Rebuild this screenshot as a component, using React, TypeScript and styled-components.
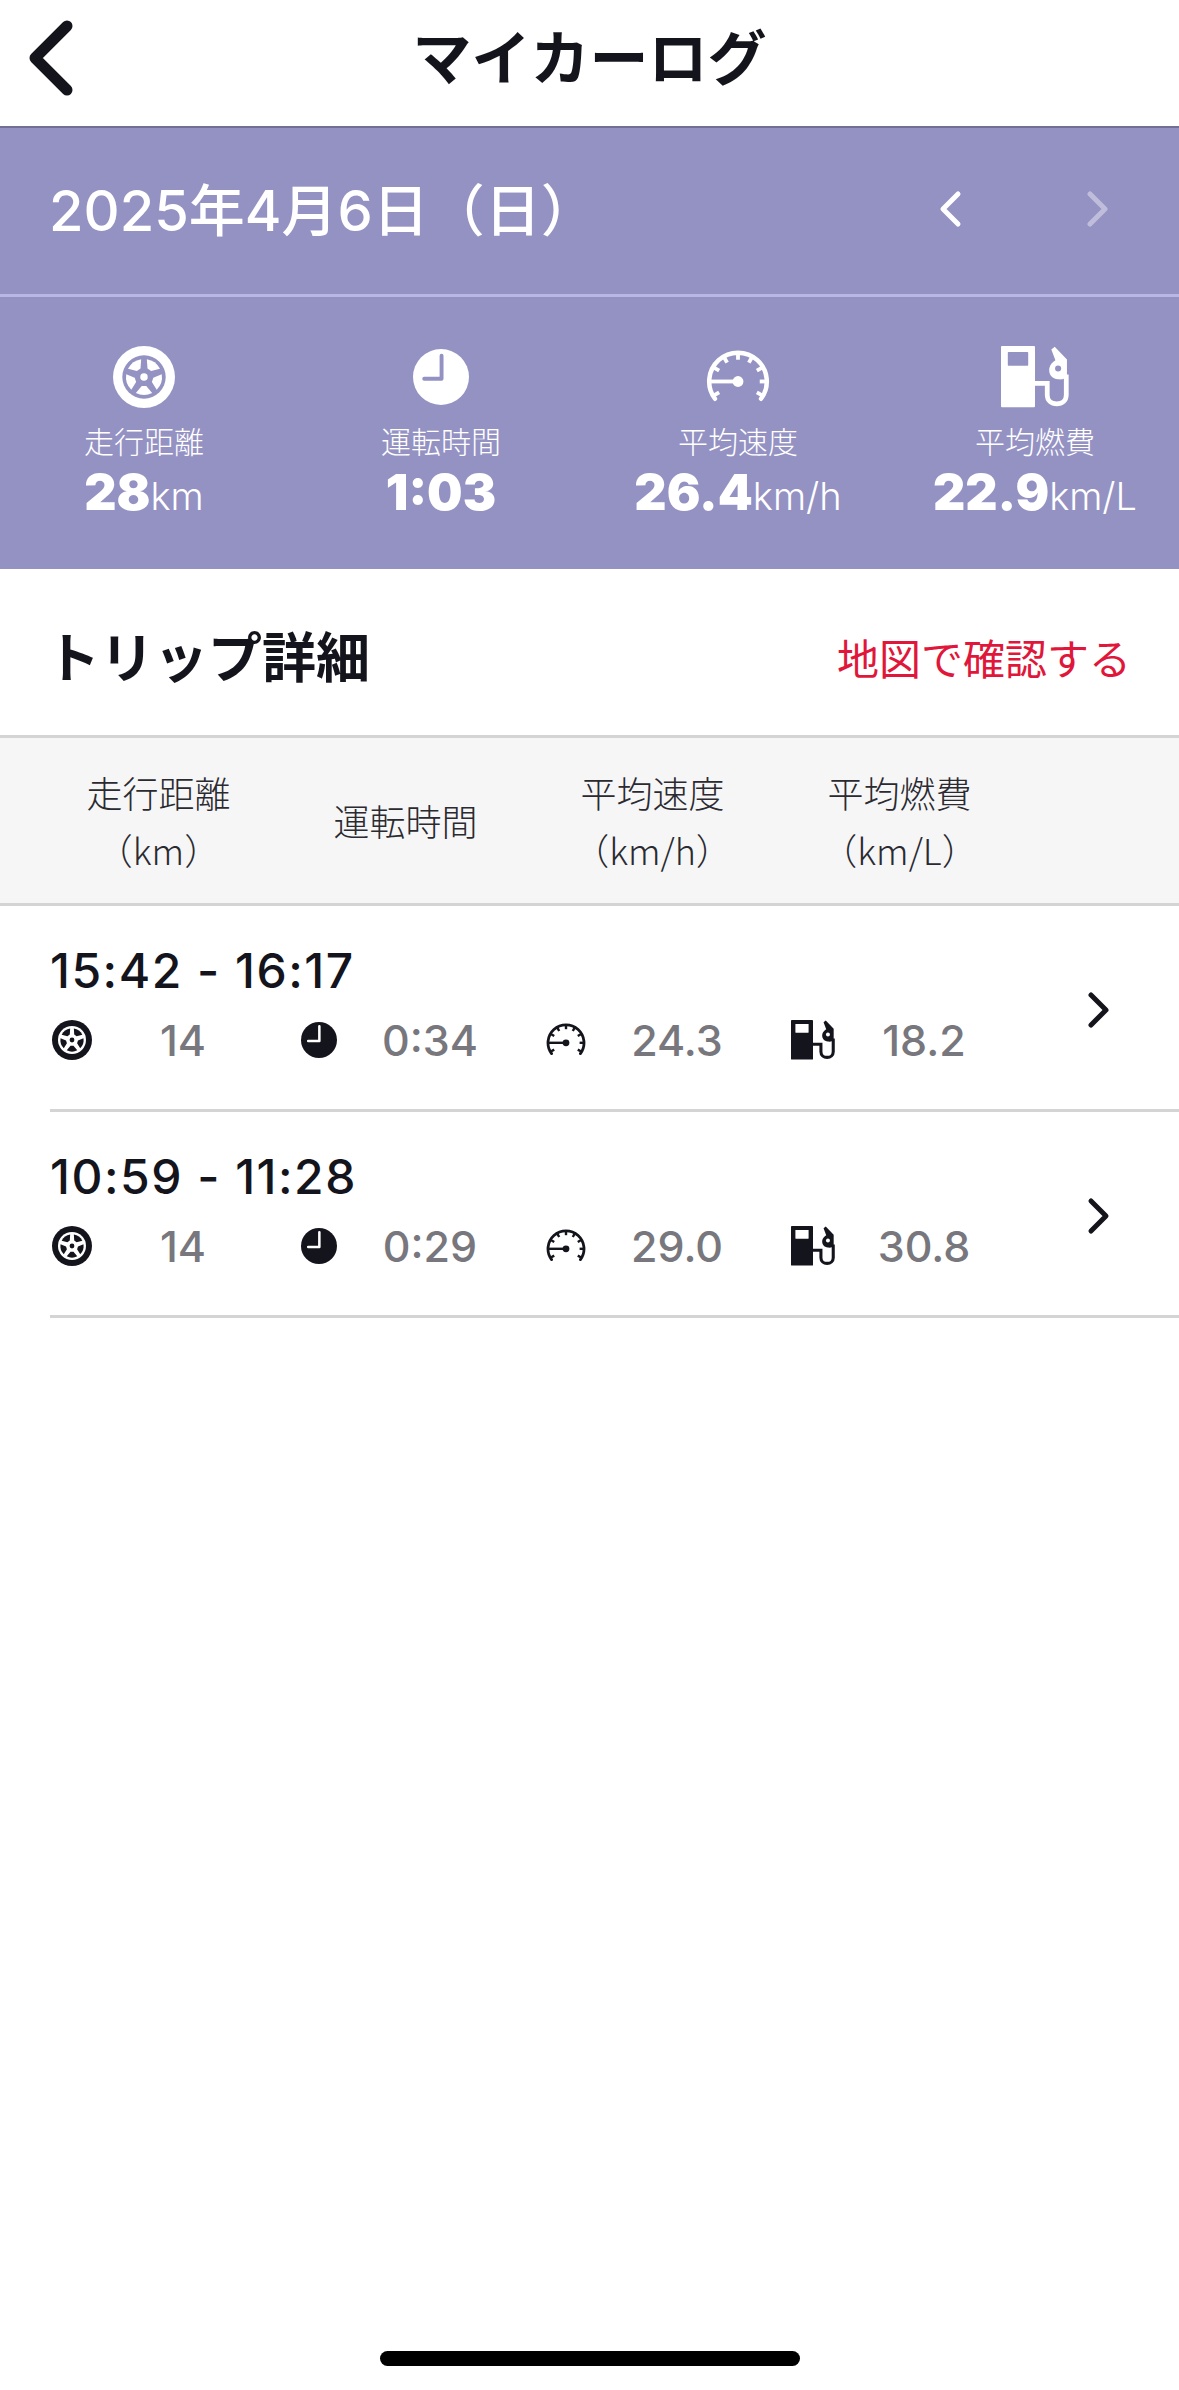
import React from 'react';
import styled, { createGlobalStyle } from 'styled-components';

const PURPLE = '#9492c3';
const INK = '#14141c';

const GlobalStyle = createGlobalStyle`
  html, body {
    margin: 0;
    padding: 0;
    background: #ffffff;
  }
  body {
    font-family: "Inter", "Noto Sans CJK JP", sans-serif;
    color: ${INK};
  }
`;

const Page = styled.div`
  position: relative;
  width: 1179px;
  height: 2390px;
  overflow: hidden;
  background: #ffffff;
`;

const Header = styled.header`
  height: 126px;
  display: flex;
  align-items: center;
  justify-content: center;
  position: relative;
  border-bottom: 2px solid #716f93;
`;

const BackButton = styled.div`
  position: absolute;
  left: 24px;
  top: 16px;
  width: 56px;
  height: 84px;
`;

const Title = styled.h1`
  margin: 0 0 18px;
  font-family: "Noto Sans CJK JP", sans-serif;
  font-size: 59px;
  font-weight: 700;
  line-height: 1;
`;

const DateBar = styled.div`
  height: 166px;
  background: ${PURPLE};
  border-bottom: 3px solid #b9b8e2;
  display: flex;
  align-items: center;
  justify-content: space-between;
  padding: 0 68px 0 49px;
`;

const DateText = styled.div`
  font-family: "Inter", "Noto Sans CJK JP", sans-serif;
  font-size: 56px;
  font-weight: 500;
  color: #ffffff;
  line-height: 1;
`;

const DateNav = styled.div`
  display: flex;
  gap: 122px;
  margin-top: -5px;
`;

const NavArrow = styled.svg<{ $dim?: boolean }>`
  width: 26px;
  height: 38px;
  display: block;
  opacity: ${(p) => (p.$dim ? 0.4 : 1)};
`;

const StatsBar = styled.div`
  height: 272px;
  background: ${PURPLE};
  display: grid;
  grid-template-columns: repeat(4, 297px);
  justify-content: center;
  color: #ffffff;
`;

const StatCell = styled.div`
  display: flex;
  flex-direction: column;
  align-items: center;
  padding-top: 44px;
  white-space: nowrap;
`;

const StatIcon = styled.div`
  width: 72px;
  height: 72px;
  display: flex;
  align-items: center;
  justify-content: center;
`;

const StatLabel = styled.div`
  font-family: "Noto Sans CJK JP", sans-serif;
  font-size: 30px;
  font-weight: 300;
  line-height: 44px;
  margin-top: 5px;
`;

const StatValue = styled.div`
  font-size: 50px;
  font-weight: 900;
  line-height: 56px;
  margin-top: 2px;
`;

const StatUnit = styled.span`
  font-size: 38px;
  font-weight: 300;
`;

const TripHeader = styled.div`
  height: 160px;
  display: flex;
  align-items: center;
  justify-content: space-between;
  padding: 6px 48px 0 46px;
  border-bottom: 3px solid #d4d4d4;
`;

const TripTitle = styled.h2`
  margin: 0;
  font-family: "Noto Sans CJK JP", sans-serif;
  font-size: 54px;
  font-weight: 700;
  line-height: 1;
`;

const MapLink = styled.a`
  margin-top: 3px;
  font-family: "Noto Sans CJK JP", sans-serif;
  font-size: 42px;
  font-weight: 400;
  color: #e0173a;
  line-height: 1;
`;

const ColumnHead = styled.div`
  height: 165px;
  background: #f6f6f7;
  border-bottom: 3px solid #d4d4d4;
  display: grid;
  grid-template-columns: repeat(4, 247px);
  padding-left: 35px;
  align-items: center;
`;

const HeadCell = styled.div`
  text-align: center;
  font-family: "Noto Sans CJK JP", sans-serif;
  font-size: 36px;
  font-weight: 300;
  line-height: 57px;
  color: #2a2a30;
`;

const TripRow = styled.div`
  height: 165px;
  margin-left: 50px;
  border-bottom: 3px solid #d4d4d4;
  position: relative;
  padding-top: 38px;
`;

const TripTime = styled.div`
  font-size: 48px;
  font-weight: 500;
  letter-spacing: 1.5px;
  line-height: 54px;
`;

const TripStats = styled.div`
  display: grid;
  grid-template-columns: repeat(4, 247px);
  margin-top: 20px;
`;

const TripStat = styled.div`
  display: grid;
  grid-template-columns: 44px 178px;
  align-items: center;
`;

const TripIcon = styled.div`
  width: 44px;
  height: 44px;
  display: flex;
  align-items: center;
  justify-content: center;
`;

const TripValue = styled.div`
  text-align: center;
  font-size: 43px;
  font-weight: 500;
  line-height: 44px;
  color: #77777d;
`;

const RowChevron = styled.svg`
  position: absolute;
  left: 1036px;
  top: 85px;
  width: 26px;
  height: 38px;
`;

const HomeIndicator = styled.div`
  position: absolute;
  left: 380px;
  top: 2351px;
  width: 420px;
  height: 15px;
  border-radius: 8px;
  background: #000000;
`;

type IconProps = { size: number; hole: string };

// white wedges sit between the five spokes of the wheel
const wedgePath = (i: number) => {
  const a = ((i * 72 + 36 - 90) * Math.PI) / 180;
  const pt = (r: number, d: number) => {
    const t = a + (d * Math.PI) / 180;
    return `${(50 + r * Math.cos(t)).toFixed(2)} ${(50 + r * Math.sin(t)).toFixed(2)}`;
  };
  return `M${pt(15, -14)}L${pt(29, -27)}A29 29 0 0 1 ${pt(29, 27)}L${pt(15, 14)}Z`;
};

const WheelIcon: React.FC<IconProps> = ({ size, hole }) => (
  <svg width={size} height={size} viewBox="0 0 100 100">
    <circle cx="50" cy="50" r="50" fill="currentColor" />
    <circle cx="50" cy="50" r="35" fill={hole} />
    {[0, 1, 2, 3, 4].map((i) => (
      <path key={i} d={wedgePath(i)} fill="currentColor" />
    ))}
    <circle cx="50" cy="50" r="6" fill="currentColor" />
  </svg>
);

const ClockIcon: React.FC<IconProps> = ({ size, hole }) => (
  <svg width={size} height={size} viewBox="0 0 100 100">
    <circle cx="50" cy="50" r="50" fill="currentColor" />
    <path d="M51 12V53H20" fill="none" stroke={hole} strokeWidth="7" strokeLinecap="round" strokeLinejoin="round" />
  </svg>
);

const GAUGE_TICKS = [-120, -60, -30, 0, 30, 60, 90, 120];

const gaugeTick = (deg: number) => {
  const t = ((deg - 90) * Math.PI) / 180;
  const at = (r: number) => `${(50 + r * Math.cos(t)).toFixed(2)} ${(57 + r * Math.sin(t)).toFixed(2)}`;
  return `M${at(45)}L${at(34)}`;
};

const GaugeIcon: React.FC<{ size: number }> = ({ size }) => (
  <svg width={size} height={size} viewBox="0 0 100 100" fill="none" stroke="currentColor">
    <path d="M14 84A45 45 0 1 1 86 84" strokeWidth="7" strokeLinecap="round" />
    {GAUGE_TICKS.map((deg) => (
      <path key={deg} d={gaugeTick(deg)} strokeWidth="6" />
    ))}
    <path d="M5 57H50" strokeWidth="6" />
    <circle cx="50" cy="57" r="8.5" fill="currentColor" stroke="none" />
  </svg>
);

const PumpIcon: React.FC<IconProps> = ({ size, hole }) => (
  <svg width={size} height={size * 0.9} viewBox="0 0 100 90">
    <rect x="0" y="0" width="50" height="90" rx="1.5" fill="currentColor" />
    <rect x="10" y="9" width="30" height="20" rx="1" fill={hole} />
    <path d="M50 55H68V72C68 80 74 85 82 85C90 85 96 80 96 72V42" fill="none" stroke="currentColor" strokeWidth="7" />
    <path d="M74 5L79 1L97 20V42C97 48 90 50 84 49C75 48 70 42 71 33C72 27 76 24 80 21Z" fill="currentColor" />
    <circle cx="84" cy="33" r="4.5" fill={hole} />
  </svg>
);

const Chevron: React.FC<{ left?: boolean; color: string; width: number }> = ({ left, color, width }) => (
  <polyline
    points={left ? '21,4 6,19 21,34' : '5,4 20,19 5,34'}
    fill="none"
    stroke={color}
    strokeWidth={width}
    strokeLinecap="round"
    strokeLinejoin="round"
  />
);

const stats = [
  { key: 'dist', label: '走行距離', value: '28', unit: 'km' },
  { key: 'time', label: '運転時間', value: '1:03', unit: '' },
  { key: 'speed', label: '平均速度', value: '26.4', unit: 'km/h' },
  { key: 'fuel', label: '平均燃費', value: '22.9', unit: 'km/L' },
];

const trips = [
  { time: '15:42 - 16:17', dist: '14', drive: '0:34', speed: '24.3', fuel: '18.2' },
  { time: '10:59 - 11:28', dist: '14', drive: '0:29', speed: '29.0', fuel: '30.8' },
];

const bigIcon = (key: string) => {
  if (key === 'dist') return <WheelIcon size={62} hole={PURPLE} />;
  if (key === 'time') return <ClockIcon size={56} hole={PURPLE} />;
  if (key === 'speed') return <GaugeIcon size={64} />;
  return <PumpIcon size={68} hole={PURPLE} />;
};

const App: React.FC = () => {
  return (
    <Page>
      <GlobalStyle />
      <Header>
        <BackButton>
          <svg width="56" height="84" viewBox="0 0 56 84">
            <polyline
              points="43,10 11,42 43,74"
              fill="none"
              stroke={INK}
              strokeWidth="11"
              strokeLinecap="round"
              strokeLinejoin="round"
            />
          </svg>
        </BackButton>
        <Title>マイカーログ</Title>
      </Header>

      <DateBar>
        <DateText>2025年4月6日（日）</DateText>
        <DateNav>
          <NavArrow viewBox="0 0 26 38">
            <Chevron left color="#ffffff" width={5} />
          </NavArrow>
          <NavArrow $dim viewBox="0 0 26 38">
            <Chevron color="#ffffff" width={5} />
          </NavArrow>
        </DateNav>
      </DateBar>

      <StatsBar>
        {stats.map((s) => (
          <StatCell key={s.key}>
            <StatIcon>{bigIcon(s.key)}</StatIcon>
            <StatLabel>{s.label}</StatLabel>
            <StatValue>
              {s.value}
              {s.unit && <StatUnit>{s.unit}</StatUnit>}
            </StatValue>
          </StatCell>
        ))}
      </StatsBar>

      <TripHeader>
        <TripTitle>トリップ詳細</TripTitle>
        <MapLink>地図で確認する</MapLink>
      </TripHeader>

      <ColumnHead>
        <HeadCell>走行距離<br />（km）</HeadCell>
        <HeadCell>運転時間</HeadCell>
        <HeadCell>平均速度<br />（km/h）</HeadCell>
        <HeadCell>平均燃費<br />（km/L）</HeadCell>
      </ColumnHead>

      {trips.map((t) => (
        <TripRow key={t.time}>
          <TripTime>{t.time}</TripTime>
          <TripStats>
            <TripStat>
              <TripIcon><WheelIcon size={40} hole="#ffffff" /></TripIcon>
              <TripValue>{t.dist}</TripValue>
            </TripStat>
            <TripStat>
              <TripIcon><ClockIcon size={36} hole="#ffffff" /></TripIcon>
              <TripValue>{t.drive}</TripValue>
            </TripStat>
            <TripStat>
              <TripIcon><GaugeIcon size={40} /></TripIcon>
              <TripValue>{t.speed}</TripValue>
            </TripStat>
            <TripStat>
              <TripIcon><PumpIcon size={44} hole="#ffffff" /></TripIcon>
              <TripValue>{t.fuel}</TripValue>
            </TripStat>
          </TripStats>
          <RowChevron viewBox="0 0 26 38">
            <Chevron color={INK} width={5} />
          </RowChevron>
        </TripRow>
      ))}

      <HomeIndicator />
    </Page>
  );
};

export default App;
